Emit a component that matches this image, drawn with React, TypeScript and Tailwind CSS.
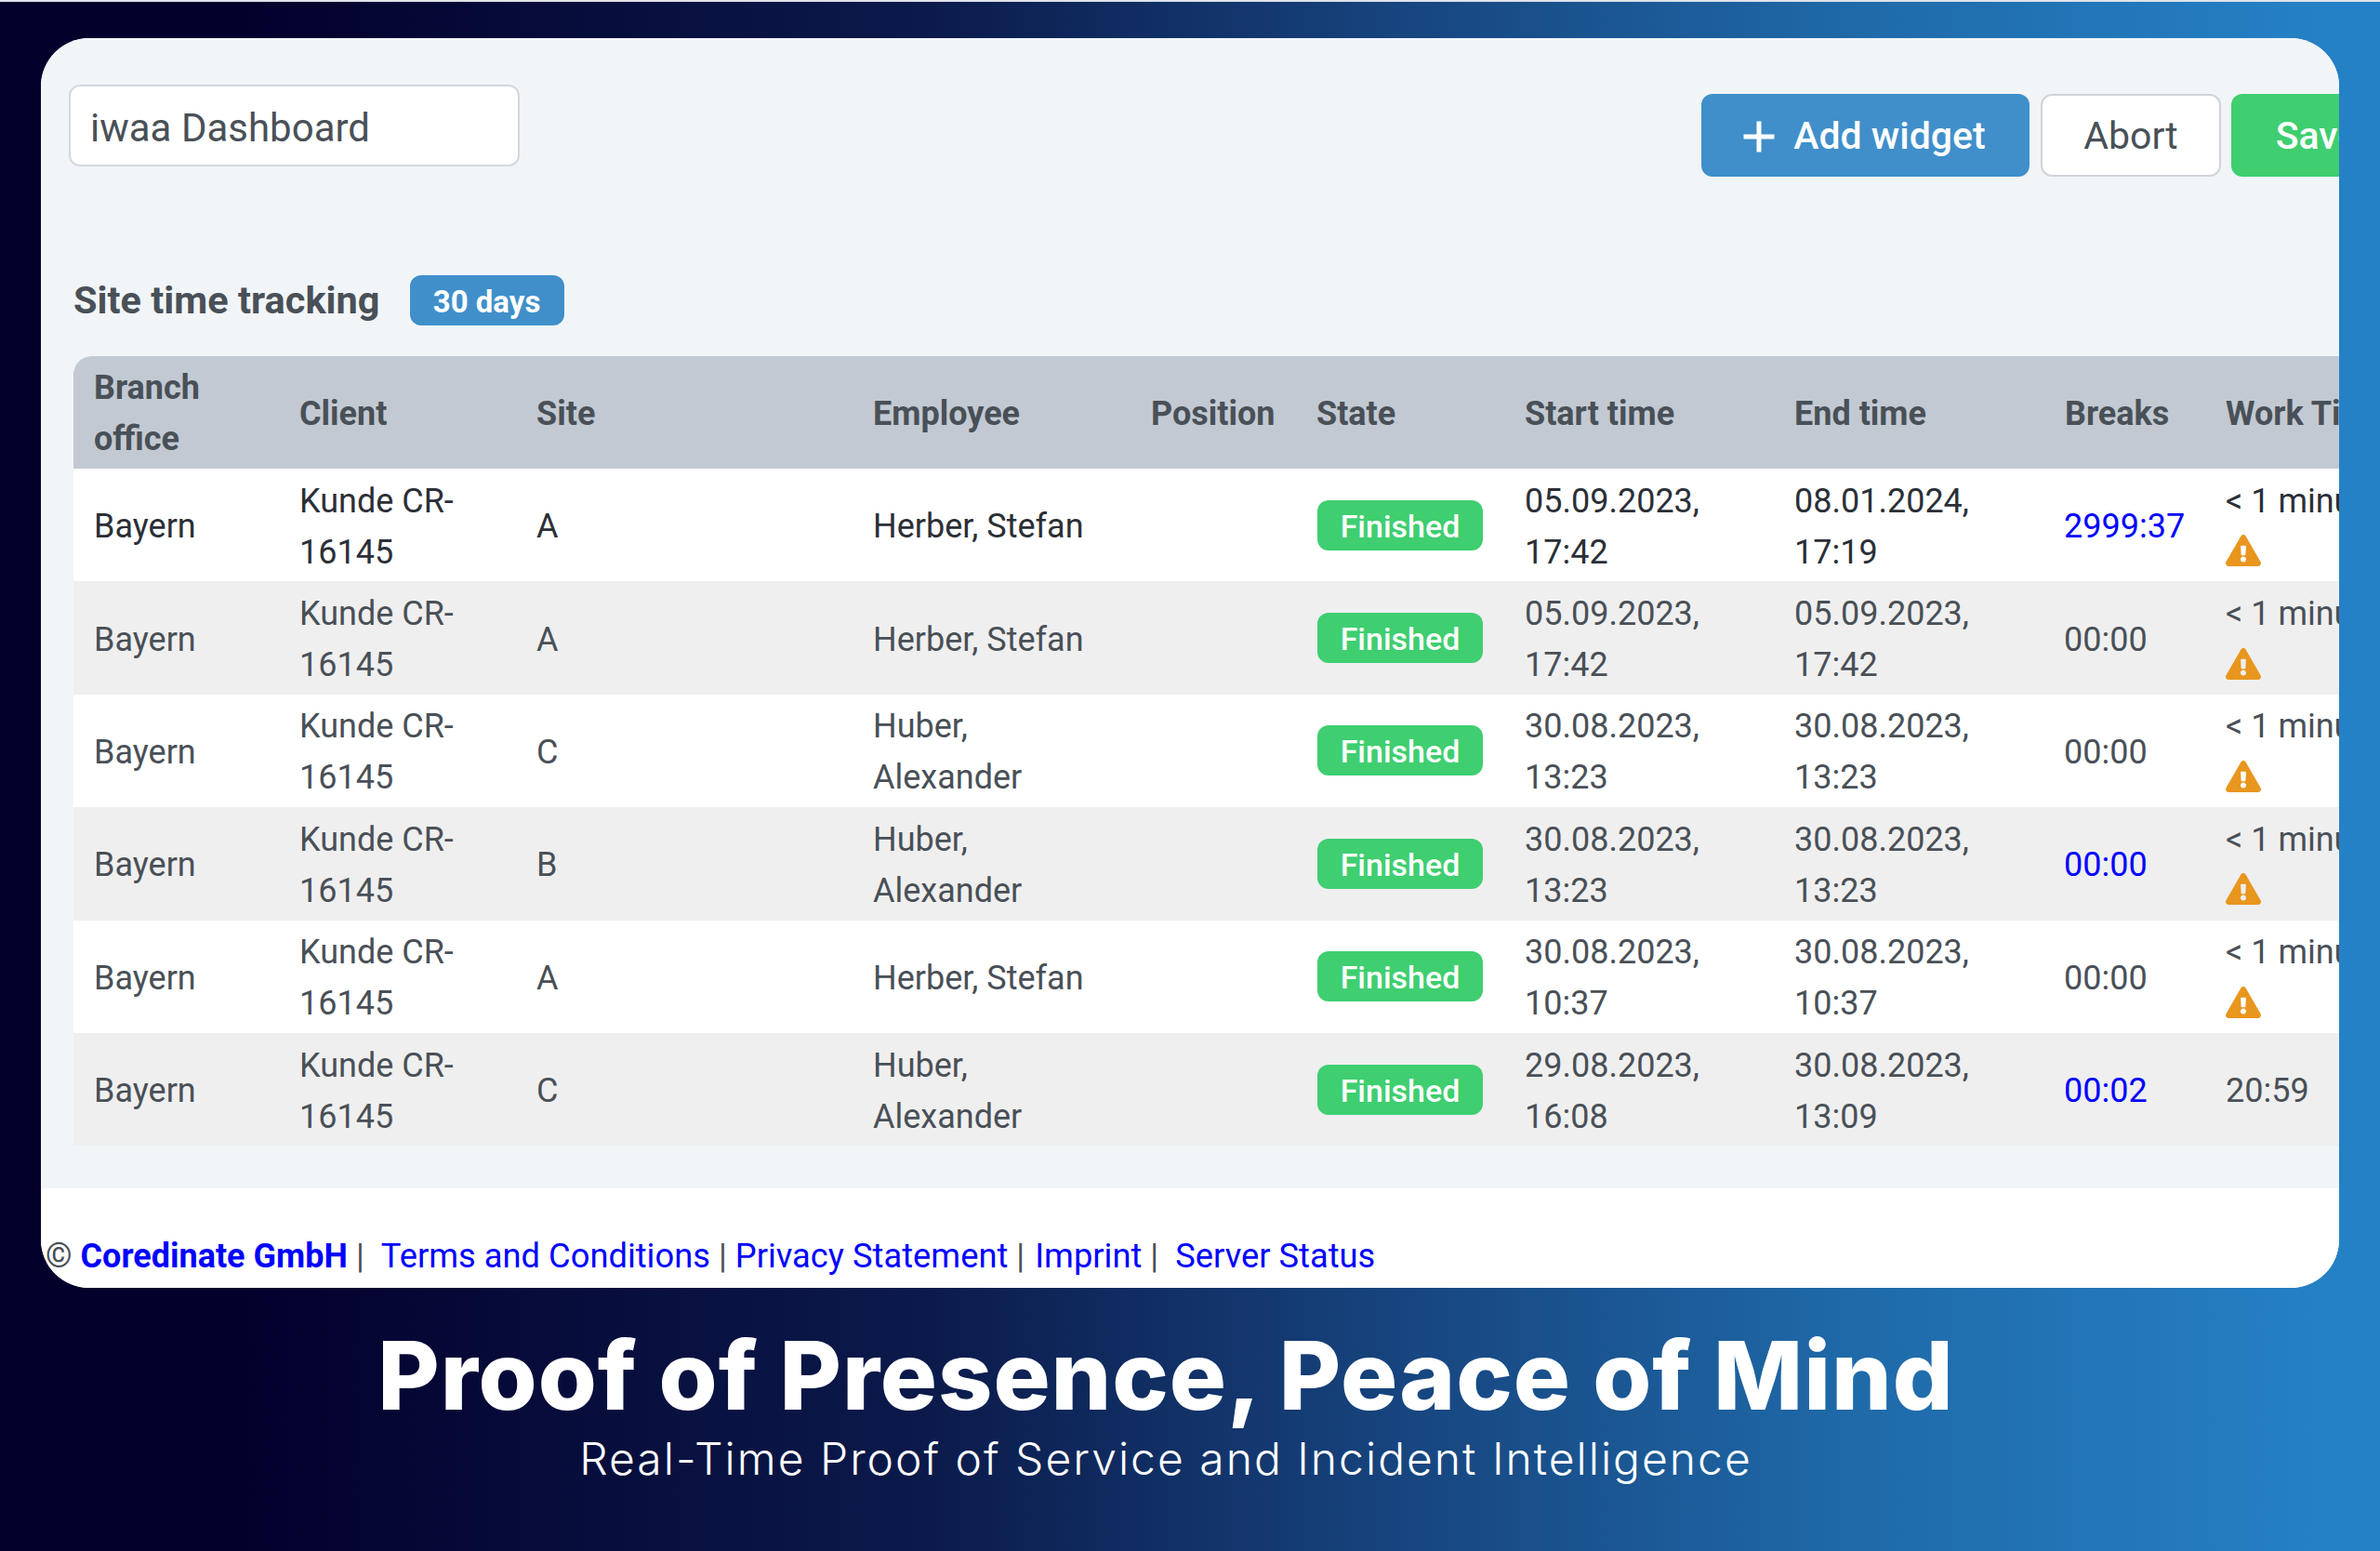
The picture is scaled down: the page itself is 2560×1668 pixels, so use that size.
import { FaExclamationTriangle } from "react-icons/fa";

type Row = {
  client: string[];
  site: string;
  employee: string[];
  start: string[];
  end: string[];
  breaks: string;
  breaksLink: boolean;
  work: string;
  warn: boolean;
  dark?: boolean;
};

const rows: Row[] = [
  { client: ["Kunde CR-", "16145"], site: "A", employee: ["Herber, Stefan"], start: ["05.09.2023,", "17:42"], end: ["08.01.2024,", "17:19"], breaks: "2999:37", breaksLink: true, work: "< 1 minute", warn: true, dark: true },
  { client: ["Kunde CR-", "16145"], site: "A", employee: ["Herber, Stefan"], start: ["05.09.2023,", "17:42"], end: ["05.09.2023,", "17:42"], breaks: "00:00", breaksLink: false, work: "< 1 minute", warn: true },
  { client: ["Kunde CR-", "16145"], site: "C", employee: ["Huber,", "Alexander"], start: ["30.08.2023,", "13:23"], end: ["30.08.2023,", "13:23"], breaks: "00:00", breaksLink: false, work: "< 1 minute", warn: true },
  { client: ["Kunde CR-", "16145"], site: "B", employee: ["Huber,", "Alexander"], start: ["30.08.2023,", "13:23"], end: ["30.08.2023,", "13:23"], breaks: "00:00", breaksLink: true, work: "< 1 minute", warn: true },
  { client: ["Kunde CR-", "16145"], site: "A", employee: ["Herber, Stefan"], start: ["30.08.2023,", "10:37"], end: ["30.08.2023,", "10:37"], breaks: "00:00", breaksLink: false, work: "< 1 minute", warn: true },
  { client: ["Kunde CR-", "16145"], site: "C", employee: ["Huber,", "Alexander"], start: ["29.08.2023,", "16:08"], end: ["30.08.2023,", "13:09"], breaks: "00:02", breaksLink: true, work: "20:59", warn: false },
];

const headers = ["Client", "Site", "Employee", "Position", "State", "Start time", "End time", "Breaks", "Work Time"];

function Lines({ items }: { items: string[] }) {
  return (
    <>
      {items.map((t) => (
        <div key={t} className="whitespace-nowrap">{t}</div>
      ))}
    </>
  );
}

export default function App() {
  return (
    <div className="w-[2560px] h-[1668px] overflow-hidden flex flex-col items-center border-t-2 border-[#dfe3ea] bg-[linear-gradient(90deg,#03002c_10%,#0b1a4b_39%,#17457f_59%,#1f6aa9_78%,#2581c5_98%)] font-['Roboto',sans-serif]">
      <div className="mt-[39px] w-[2472px] h-[1344px] shrink-0 rounded-[52px] overflow-hidden flex flex-col bg-white">
        <main className="flex-1 bg-[#f1f5f8] pl-[30px] pt-[50px] min-h-0">
          <div className="flex items-start w-[2600px]">
            <div className="w-[485px] h-[88px] rounded-[12px] border-2 border-[#d3d8de] bg-white flex items-center pl-[21px] pt-[5px] text-[42px] text-[#495057]">
              iwaa Dashboard
            </div>
            <button className="ml-[1271px] mt-[10px] w-[353px] h-[89px] pt-[2px] pr-[2px] rounded-[12px] bg-[#408fca] text-white text-[41px] font-medium flex items-center justify-center gap-[20px]">
              <svg width="34" height="34" viewBox="0 0 34 34" fill="none" stroke="white" strokeWidth="5" strokeLinecap="square">
                <path d="M17 3v28M3 17h28" />
              </svg>
              Add widget
            </button>
            <button className="ml-[12px] mt-[10px] w-[194px] h-[89px] pt-[2px] rounded-[12px] border-2 border-[#d0d4d9] bg-white text-[#495057] text-[41px]">
              Abort
            </button>
            <button className="ml-[11px] mt-[10px] w-[184px] h-[89px] pt-[2px] rounded-[12px] bg-[#3fce70] text-white text-[41px] font-medium">
              Save
            </button>
          </div>
          <div className="ml-[5px] mt-[106px] h-[54px] flex items-center">
            <span className="text-[41.5px] font-bold text-[#495057] leading-none">Site time tracking</span>
            <span className="ml-[32px] w-[166px] h-[54px] pt-[4px] rounded-[12px] bg-[#408fca] text-white text-[33px] font-bold flex items-center justify-center">
              30 days
            </span>
          </div>
          <table className="ml-[5px] mt-[33px] table-fixed w-[2470px] border-collapse text-[36px] leading-[55px]">
            <colgroup>
              <col className="w-[221px]" />
              <col className="w-[255px]" />
              <col className="w-[362px]" />
              <col className="w-[299px]" />
              <col className="w-[178px]" />
              <col className="w-[224px]" />
              <col className="w-[290px]" />
              <col className="w-[291px]" />
              <col className="w-[173px]" />
              <col className="w-[177px]" />
            </colgroup>
            <thead>
              <tr className="h-[121px] bg-[#c2c9d2] text-[#495057] font-bold text-left">
                <th className="pl-[22px] pt-[3px] font-bold rounded-tl-[20px]">
                  <div>Branch</div>
                  <div>office</div>
                </th>
                {headers.map((h) => (
                  <th key={h} className="pl-[22px] pt-[3px] font-bold whitespace-nowrap">{h}</th>
                ))}
              </tr>
            </thead>
            <tbody>
              {rows.map((r, i) => (
                <tr key={i} className={`h-[121.4px] ${i % 2 === 0 ? "bg-white" : "bg-[#efefef]"} ${r.dark ? "text-[#2b2f36]" : "text-[#495057]"}`}>
                  <td className="pl-[22px] pt-[4px]">Bayern</td>
                  <td className="pl-[22px] pt-[4px]"><Lines items={r.client} /></td>
                  <td className="pl-[22px] pt-[4px]">{r.site}</td>
                  <td className="pl-[22px] pt-[4px]"><Lines items={r.employee} /></td>
                  <td className="pl-[22px]"></td>
                  <td className="pl-[23px]">
                    <span className="w-[178px] h-[54px] pt-[3px] rounded-[12px] bg-[#3fce70] text-white text-[34px] font-medium flex items-center justify-center">
                      Finished
                    </span>
                  </td>
                  <td className="pl-[22px] pt-[4px]"><Lines items={r.start} /></td>
                  <td className="pl-[22px] pt-[4px]"><Lines items={r.end} /></td>
                  <td className={`pl-[21px] pt-[4px] whitespace-nowrap ${r.breaksLink ? "text-[#0000ff]" : ""}`}>{r.breaks}</td>
                  <td className="pl-[22px] whitespace-nowrap">
                    {r.warn ? (
                      <>
                        <div className="pt-[2px]">{r.work}</div>
                        <div className="h-[51px] mb-[2px] flex items-center">
                          <FaExclamationTriangle className="text-[38px] text-[#e8961e]" />
                        </div>
                      </>
                    ) : (
                      <div className="pt-[4px]">{r.work}</div>
                    )}
                  </td>
                </tr>
              ))}
            </tbody>
          </table>
        </main>
        <footer className="h-[107px] shrink-0 bg-white pt-[45px] pl-[5px] text-[36.3px] leading-[55px] text-[#495057] whitespace-nowrap">
          © <b className="text-[36px] font-bold text-[#0000ff]">Coredinate GmbH</b>
          <span> | </span>
          <span className="ml-[9px] text-[#0000ff]">Terms and Conditions</span>
          <span> | </span>
          <span className="text-[#0000ff]">Privacy Statement</span>
          <span> | </span>
          <span className="ml-[2px] text-[#0000ff]">Imprint</span>
          <span> | </span>
          <span className="ml-[9px] text-[#0000ff]">Server Status</span>
        </footer>
      </div>
      <div className="mr-[52px] mt-[34px] flex flex-col items-center text-white font-['Inter',sans-serif] whitespace-nowrap">
        <h1 className="text-[102px] leading-[120px] font-extrabold tracking-[0.9px]">Proof of Presence, Peace of Mind</h1>
        <p className="text-[48px] leading-[60px] font-light tracking-[2px]">Real-Time Proof of Service and Incident Intelligence</p>
      </div>
    </div>
  );
}
